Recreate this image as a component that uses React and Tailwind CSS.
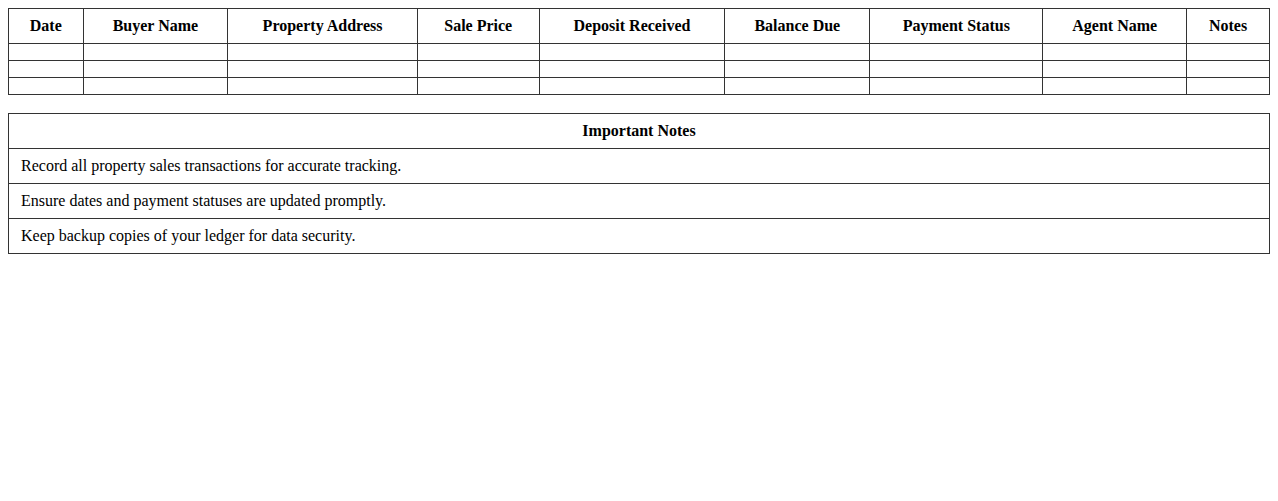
import React from "react";

const columns = [
  "Date",
  "Buyer Name",
  "Property Address",
  "Sale Price",
  "Deposit Received",
  "Balance Due",
  "Payment Status",
  "Agent Name",
  "Notes",
];

const notes = [
  "Record all property sales transactions for accurate tracking.",
  "Ensure dates and payment statuses are updated promptly.",
  "Keep backup copies of your ledger for data security.",
];

function App() {
  return (
    <div className="p-2 bg-white text-black text-base leading-[normal] font-['Liberation_Serif',_'Times_New_Roman',_serif]">
      <table className="w-full border-collapse mb-[18px]">
        <thead>
          <tr>
            {columns.map((col) => (
              <th key={col} className="border border-[#333] px-3 py-2 text-center font-bold">
                {col}
              </th>
            ))}
          </tr>
        </thead>
        <tbody>
          {[0, 1, 2].map((row) => (
            <tr key={row}>
              {columns.map((col) => (
                <td key={col} className="border border-[#333] px-3 py-2"></td>
              ))}
            </tr>
          ))}
        </tbody>
      </table>

      <table className="w-full border-collapse">
        <thead>
          <tr>
            <th className="border border-[#333] px-3 py-2 text-center font-bold">Important Notes</th>
          </tr>
        </thead>
        <tbody>
          {notes.map((note) => (
            <tr key={note}>
              <td className="border border-[#333] px-3 py-2 text-left">{note}</td>
            </tr>
          ))}
        </tbody>
      </table>
    </div>
  );
}

export default App;
